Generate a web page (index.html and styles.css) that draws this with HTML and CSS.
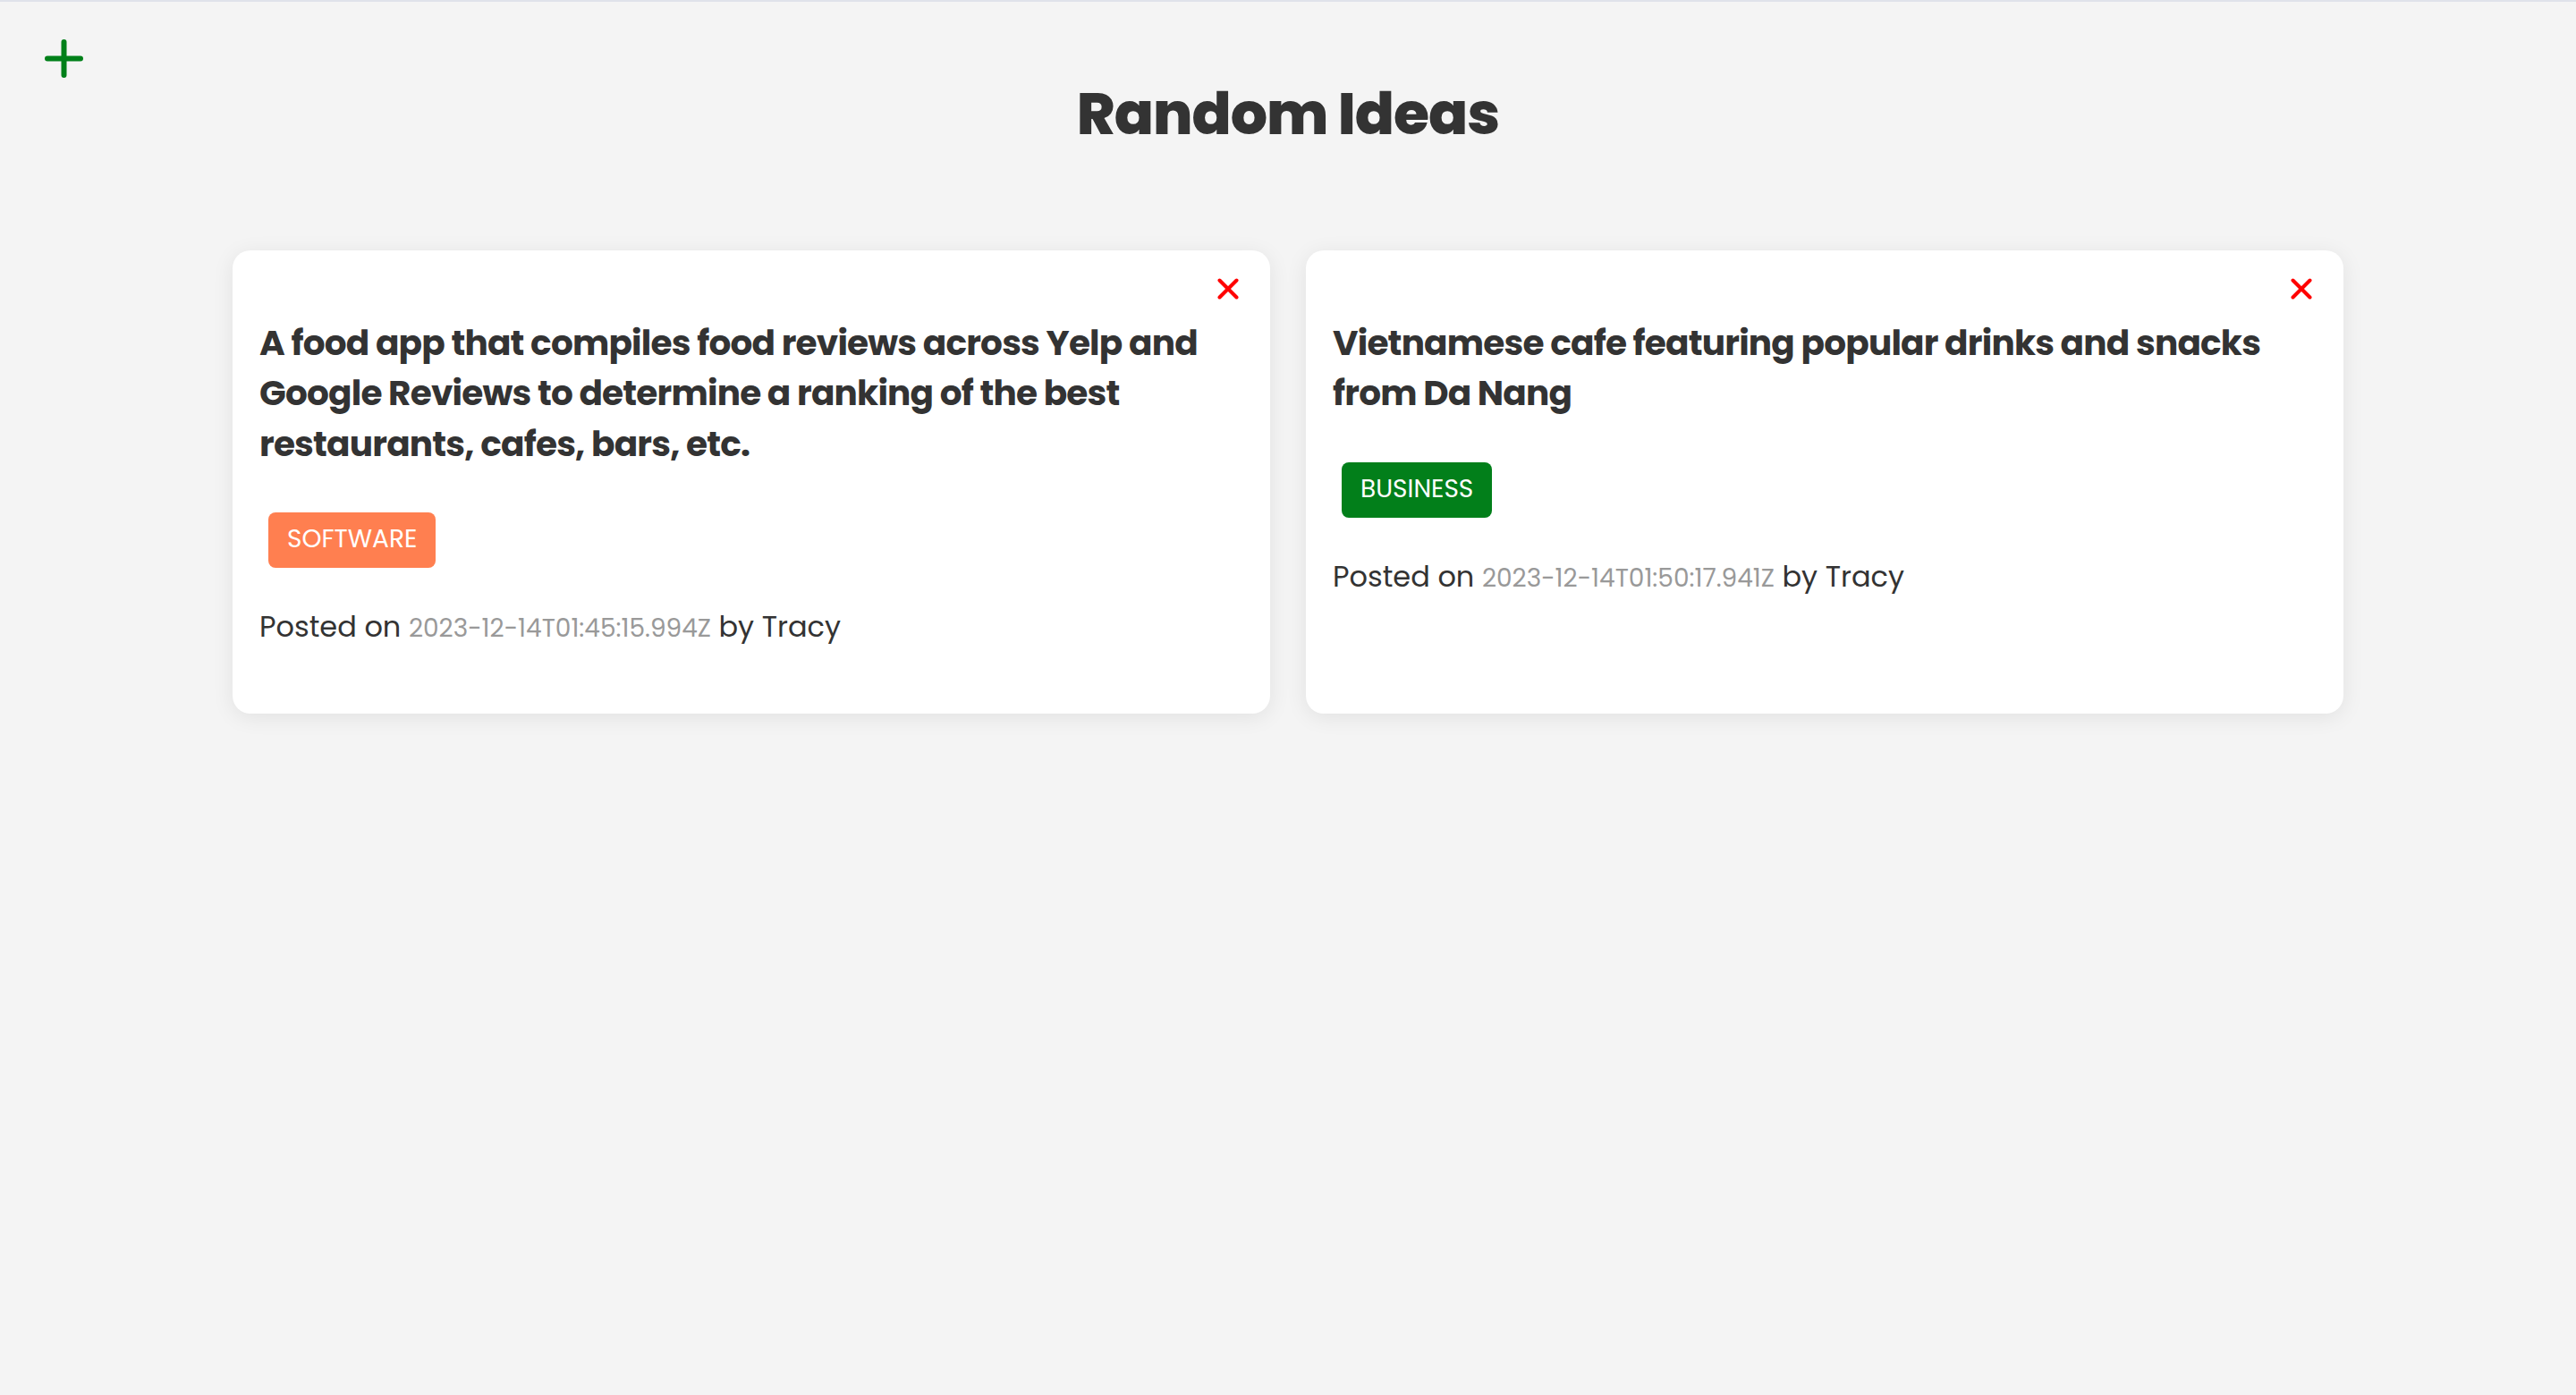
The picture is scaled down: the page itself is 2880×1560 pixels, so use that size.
FILE: index.html
```html
<!DOCTYPE html>
<html lang="en">
<head>
<meta charset="utf-8">
<title>Random Ideas</title>
<link rel="stylesheet" href="styles.css">
</head>
<body>
  <header class="page-header">
    <button class="add-btn" aria-label="Add idea">
      <svg width="43" height="43" viewBox="0 0 43 43" aria-hidden="true">
        <line x1="21.5" y1="3" x2="21.5" y2="40" />
        <line x1="3" y1="21.5" x2="40" y2="21.5" />
      </svg>
    </button>
    <h1 class="title">Random Ideas</h1>
    <div></div>
  </header>

  <main class="ideas">
    <article class="card">
      <div class="card-top">
        <button class="delete-btn" aria-label="Delete">
          <svg width="24" height="24" viewBox="0 0 24 24" aria-hidden="true">
            <line x1="2.5" y1="2.5" x2="21.5" y2="21.5" />
            <line x1="21.5" y1="2.5" x2="2.5" y2="21.5" />
          </svg>
        </button>
      </div>
      <h3 class="idea-text">A food app that compiles food reviews across Yelp and Google Reviews to determine a ranking of the best restaurants, cafes, bars, etc.</h3>
      <p class="tag tag-software">SOFTWARE</p>
      <p class="meta">Posted on <span class="date">2023-12-14T01:45:15.994Z</span> by <span class="author">Tracy</span></p>
    </article>

    <article class="card">
      <div class="card-top">
        <button class="delete-btn" aria-label="Delete">
          <svg width="24" height="24" viewBox="0 0 24 24" aria-hidden="true">
            <line x1="2.5" y1="2.5" x2="21.5" y2="21.5" />
            <line x1="21.5" y1="2.5" x2="2.5" y2="21.5" />
          </svg>
        </button>
      </div>
      <h3 class="idea-text">Vietnamese cafe featuring popular drinks and snacks from Da Nang</h3>
      <p class="tag tag-business">BUSINESS</p>
      <p class="meta">Posted on <span class="date">2023-12-14T01:50:17.941Z</span> by <span class="author">Tracy</span></p>
    </article>
  </main>
</body>
</html>
```

FILE: styles.css
```css
* {
  box-sizing: border-box;
}

html, body {
  margin: 0;
  padding: 0;
}

body {
  background: #f4f4f4;
  border-top: 2px solid #dfe2ea;
  font-family: Poppins, Inter, "Noto Sans", sans-serif;
  color: #333333;
  min-height: 100vh;
}

.page-header {
  display: grid;
  grid-template-columns: 1fr auto 1fr;
  align-items: start;
  padding: 42px 50px 0;
}

.add-btn {
  justify-self: start;
  background: none;
  border: none;
  padding: 0;
  margin: 0;
  width: 43px;
  height: 43px;
  cursor: pointer;
}

.add-btn svg {
  display: block;
}

.add-btn line {
  stroke: #008019;
  stroke-width: 6;
  stroke-linecap: round;
}

.title {
  margin: 45px 0 0;
  font-size: 65px;
  line-height: 78px;
  font-weight: 800;
  letter-spacing: -1px;
  color: #333333;
  text-align: center;
}

.ideas {
  width: 2360px;
  margin: 113px auto 0;
  display: grid;
  grid-template-columns: 1fr 1fr;
  gap: 40px;
  align-items: stretch;
}

.card {
  background: #ffffff;
  border-radius: 20px;
  box-shadow: 0 4px 24px rgba(0, 0, 0, 0.08);
  padding: 30px;
}

.card-top {
  display: flex;
  justify-content: flex-end;
  padding: 1px 5px 0 0;
}

.delete-btn {
  background: none;
  border: none;
  padding: 0;
  margin: 0;
  width: 24px;
  height: 24px;
  cursor: pointer;
}

.delete-btn svg {
  display: block;
}

.delete-btn line {
  stroke: #ff0000;
  stroke-width: 4;
  stroke-linecap: round;
}

.idea-text {
  margin: 20.6px 0 0;
  font-size: 39px;
  line-height: 56.5px;
  font-weight: 700;
  letter-spacing: -0.8px;
  color: #333333;
}

.tag {
  width: fit-content;
  margin: 48px 0 0 10px;
  padding: 9px 21px 11px;
  font-size: 28px;
  line-height: 42px;
  font-weight: 400;
  color: #ffffff;
  border-radius: 8px;
}

.tag-software {
  background: #ff7f50;
}

.tag-business {
  background: #027f1a;
}

.meta {
  margin: 42px 0 41px;
  font-size: 32px;
  line-height: 48px;
  font-weight: 400;
  color: #333333;
}

.date {
  font-size: 28px;
  color: #999999;
}
```
